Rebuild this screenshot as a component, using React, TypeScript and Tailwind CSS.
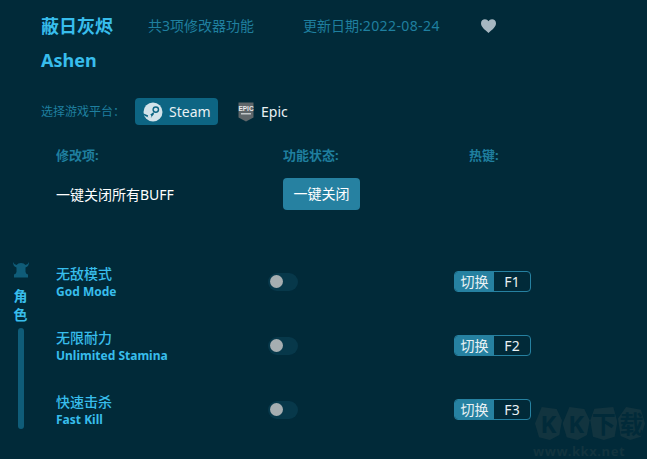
const rows = [
  { cn: "无敌模式", en: "God Mode", key: "F1" },
  { cn: "无限耐力", en: "Unlimited Stamina", key: "F2" },
  { cn: "快速击杀", en: "Fast Kill", key: "F3" },
];

function SteamIcon() {
  return (
    <svg width="20" height="20" viewBox="0 0 20 20">
      <circle cx="10" cy="10" r="9.5" fill="#d3e3ea" />
      <circle cx="12.8" cy="7.6" r="3.4" fill="#0d6583" />
      <circle cx="12.8" cy="7.6" r="1.9" fill="#d3e3ea" />
      <path d="M0.5 11.5 L6 13.8 L10.5 10 L11 12 L8.2 15.4 L5.5 15.6 L1.5 13.8Z" fill="#0d6583" />
      <circle cx="6.6" cy="14.4" r="1.8" fill="#d3e3ea" />
    </svg>
  );
}

function EpicIcon() {
  return (
    <svg width="16" height="20" viewBox="0 0 16 20">
      <path d="M0.5 0.5 H15.5 V15.5 L8 19.5 L0.5 15.5Z" fill="#5f666a" />
      <text x="8" y="8.5" textAnchor="middle" fontSize="6.5" fontWeight="700" fill="#e8eaeb" fontFamily="Liberation Sans, sans-serif">EPIC</text>
      <rect x="3" y="11" width="10" height="1.5" fill="#c3c8ca" />
    </svg>
  );
}

function Horned() {
  return (
    <svg width="16" height="16" viewBox="0 0 16 16" fill="#0f5c78">
      <path d="M0 0 Q1 2.5 3.5 3 Q5 1 8 1 Q11 1 12.5 3 Q15 2.5 16 0 Q16 4.5 12.5 5.5 L12.5 10 Q13 12 15 12.5 V15.5 H1 V12.5 Q3 12 3.5 10 L3.5 5.5 Q0 4.5 0 0Z" />
    </svg>
  );
}

export default function App() {
  return (
    <div className="relative h-[459px] w-[647px] overflow-hidden bg-[#012a39] font-['Noto_Sans','Noto_Sans_CJK_SC',sans-serif]">
      <div className="mt-[13px] flex h-[26px] items-center pl-[41px]">
        <h1 className="w-[107px] text-lg leading-[26px] font-bold text-[#38bdec]">蔽日灰烬</h1>
        <span className="w-[155px] text-sm text-[#1f7f9f]">共3项修改器功能</span>
        <span className="w-[178px] text-sm text-[#1f7f9f]">
          更新日期:<span className="tracking-[0.4px]">2022-08-24</span>
        </span>
        <svg width="15" height="14" viewBox="0 0 24 22" fill="#a6b7c1">
          <path d="M12 22 C5 16 0 12 0 6.5 C0 2.5 3 0 6.3 0 C8.8 0 10.8 1.3 12 3.4 C13.2 1.3 15.2 0 17.7 0 C21 0 24 2.5 24 6.5 C24 12 19 16 12 22Z" />
        </svg>
      </div>
      <div className="mt-[8px] pl-[41px] text-lg leading-[26px] font-bold text-[#38bdec]">Ashen</div>

      <div className="mt-[25px] flex h-[27px] items-center pl-[41px]">
        <span className="w-[94px] text-xs text-[#1f7f9f]">选择游戏平台：</span>
        <div className="flex h-[27px] w-[83px] items-center gap-[6px] rounded bg-[#0d6583] pl-[8px] text-sm text-[#e9f1f4]">
          <SteamIcon />
          Steam
        </div>
        <div className="ml-[20px] flex items-center gap-[7px] text-sm text-[#e9f1f4]">
          <EpicIcon />
          Epic
        </div>
      </div>

      <div className="mt-[21px] flex h-[20px] items-center pl-[56px] text-[13px] font-bold text-[#1f7f9f]">
        <span className="w-[227px]">修改项:</span>
        <span className="w-[186px]">功能状态:</span>
        <span>热键:</span>
      </div>

      <div className="mt-[12px] flex h-[32px] items-center pl-[56px]">
        <span className="mt-[2px] w-[227px] text-sm text-white">一键关闭所有BUFF</span>
        <button className="h-[32px] w-[77px] rounded bg-[#2681a1] text-sm text-white">一键关闭</button>
      </div>

      <div className="mt-[52px] flex">
        <div className="flex w-[41px] flex-col items-center">
          <Horned />
          <span className="mt-[8px] text-sm leading-[19px] font-bold text-[#38bdec]">角</span>
          <span className="text-sm leading-[19px] font-bold text-[#38bdec]">色</span>
          <div className="mt-[4px] h-[101px] w-[6px] rounded-full bg-[#0f5c78]" />
        </div>
        <div className="flex flex-col gap-[25px] pl-[15px]">
          {rows.map((r) => (
            <div key={r.key} className="flex h-[39px] items-center">
              <div className="w-[212px] pt-[2px] text-sm leading-[18px] font-medium text-[#38bdec]">
                <div>{r.cn}</div>
                <div className="mt-px text-xs font-bold">{r.en}</div>
              </div>
              <div className="flex h-[18px] w-[186px] items-center">
                <div className="flex h-[18px] w-[30px] items-center rounded-full bg-[#07384a]">
                  <div className="ml-[2px] h-[13px] w-[13px] rounded-full bg-[#a6aeb1]" />
                </div>
              </div>
              <div className="flex h-[21px] w-[77px] overflow-hidden rounded-[4px] border border-[#2681a1] text-sm text-[#e9f1f4]">
                <div className="flex w-[39px] items-center justify-center bg-[#2681a1]">切换</div>
                <div className="flex flex-1 items-center justify-center">{r.key}</div>
              </div>
            </div>
          ))}
        </div>
      </div>

      <div className="absolute top-[407px] left-[535px] flex w-[110px] justify-between text-[24px] leading-[33px] font-bold text-[#012a39]">
        <span className="h-[33px] w-[27px] bg-[#12343f] text-center [clip-path:polygon(25%_0,80%_6%,100%_40%,90%_85%,55%_100%,15%_92%,0_50%)]">K</span>
        <span className="h-[33px] w-[27px] bg-[#12343f] text-center [clip-path:polygon(25%_0,80%_6%,100%_40%,90%_85%,55%_100%,15%_92%,0_50%)]">K</span>
        <span className="h-[33px] w-[27px] bg-[#12343f] text-center [clip-path:polygon(15%_5%,85%_0,100%_45%,90%_90%,50%_100%,10%_90%,0_40%)]">下</span>
        <span className="h-[33px] w-[27px] bg-[#12343f] text-center [clip-path:polygon(30%_0,85%_8%,100%_50%,85%_90%,45%_100%,10%_88%,0_35%)]">载</span>
      </div>
      <div className="absolute top-[444px] left-[533px] text-[13px] leading-[14px] font-bold tracking-[0.6px] text-[#12343f]">www.kkx.net</div>
    </div>
  );
}
